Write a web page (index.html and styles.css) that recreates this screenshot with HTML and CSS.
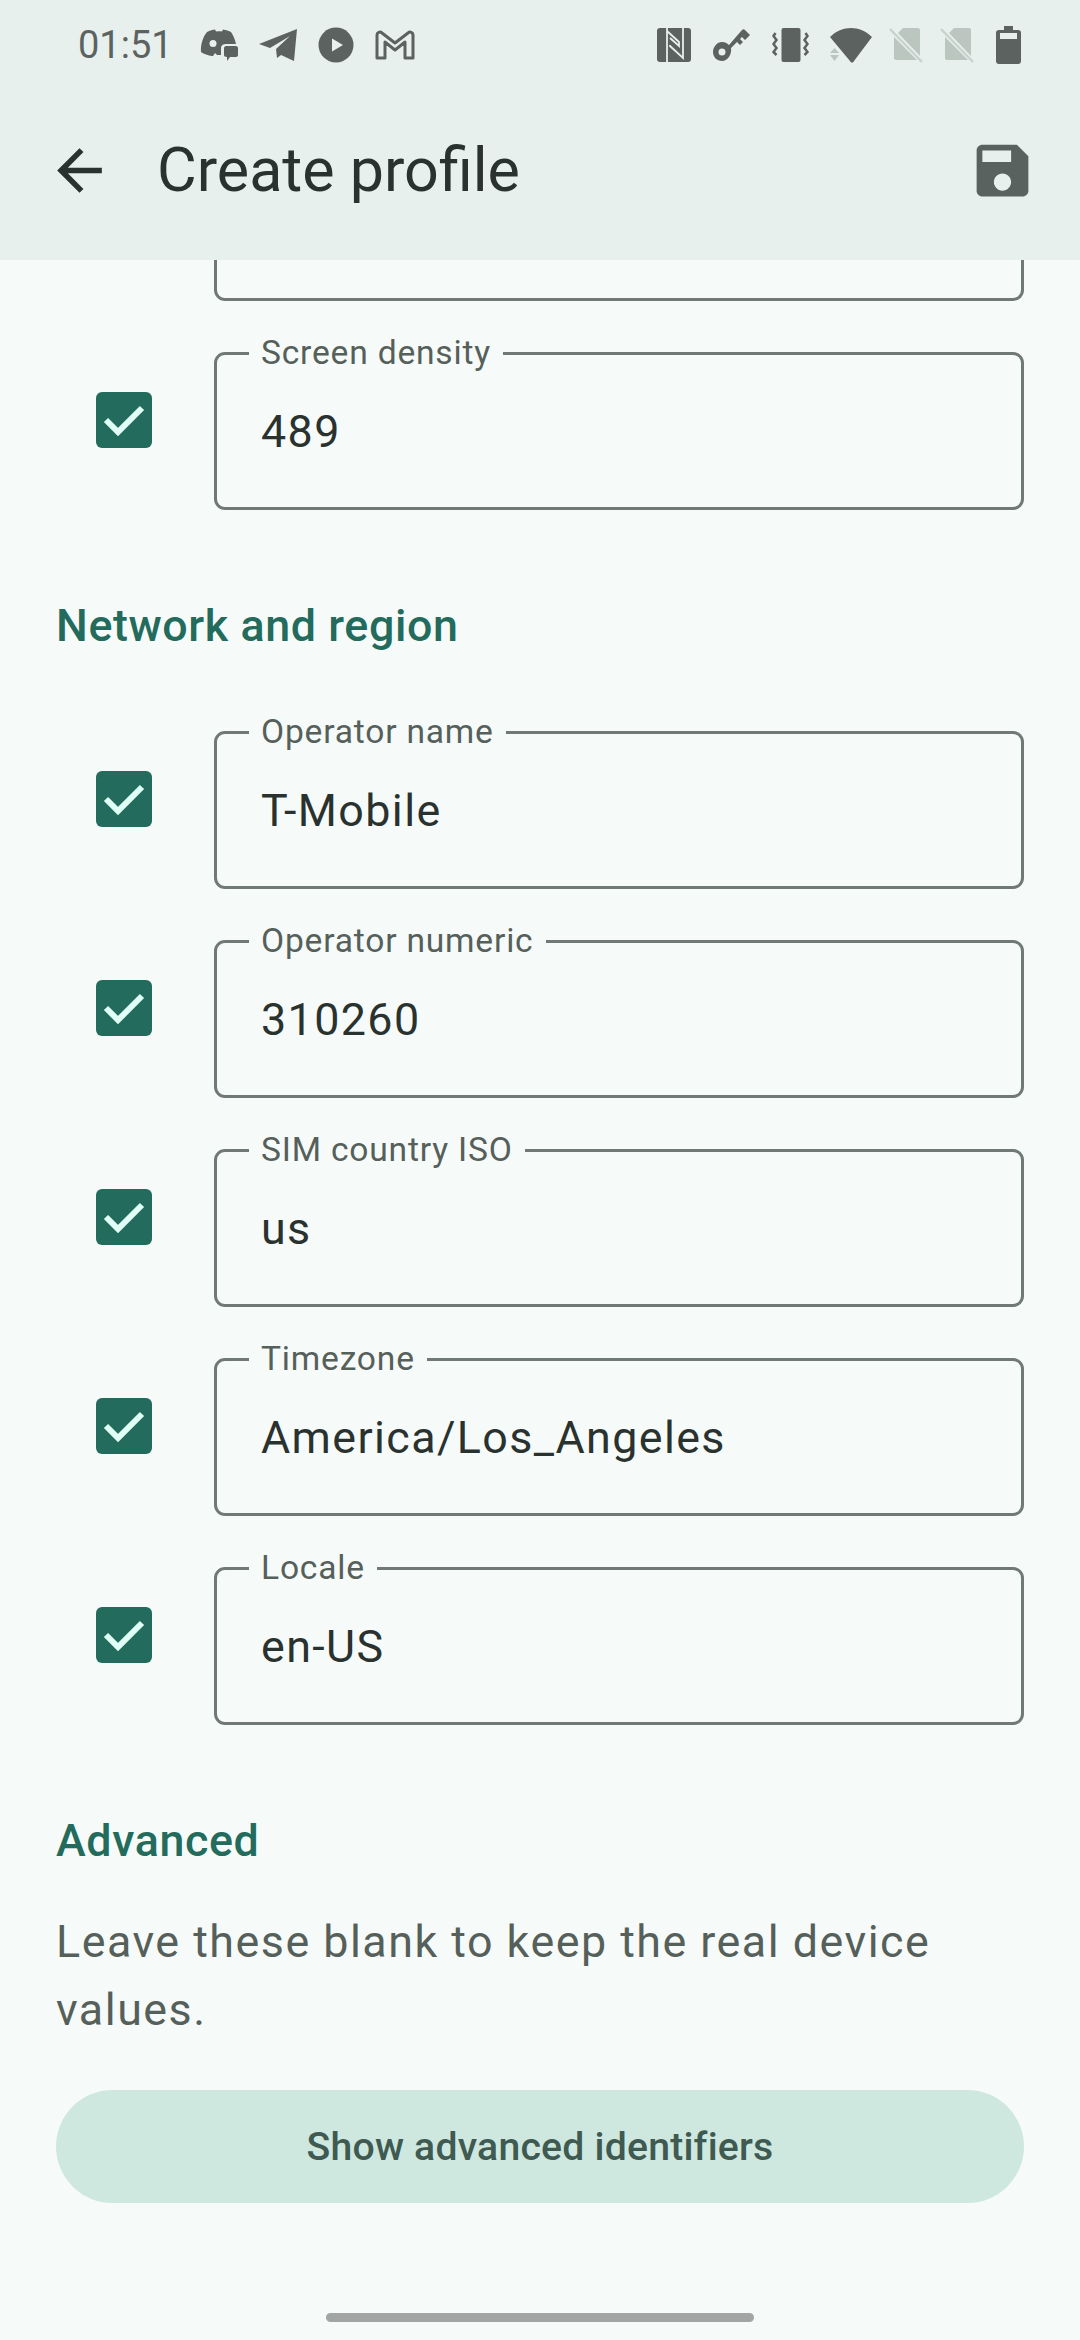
FILE: index.html
```html
<!DOCTYPE html>
<html>
	<head>
		<meta charset="UTF-8">
		<title>Create profile</title>
		<link rel="stylesheet" href="styles.css">
	</head>
	<body>
		<div class="phone">
			<div class="top">
				<div class="status">
					<span class="time">01:51</span>
					<div class="icons-left">
						<svg width="38" height="32" viewBox="0 0 38 32"><path class="ic" d="M7 3c3-1.500 6-2.500 8-2.500l1 2c2-.5 5-.5 6 0l1-2c3 .5 6 1.500 8 2.500 2 3 4 7 5 12H26c-3 0-5 1.500-5 4v7h-4l-2-2-2 3-1 0c-4-.5-8-2-11-4C.5 15 3 8 7 3z"/><circle cx="13" cy="14.500" r="3.500" fill="#e7f0ed"/><path class="ic" d="M26 17h10c1 0 2 1 2 2v7c0 1-1 2-2 2h-6l-3 4v-4c-2 0-3-1-3-2v-7c0-1 1-2 2-2z"/></svg>
						<svg width="38" height="33" viewBox="0 0 38 33"><path class="ic" d="M38 0 35 32 22 26 18 29 17 20 31 7 11 19 0 15z"/></svg>
						<svg width="36" height="36" viewBox="0 0 36 36"><circle class="ic" cx="18" cy="18" r="17.500"/><path d="M14 11.500 25 18 14 24.500z" fill="#e7f0ed"/></svg>
						<svg width="40" height="30" viewBox="0 0 40 30"><path d="M2 28V5C2 2.500 5 1 7 3l13 10L33 3c2-2 5-.5 5 2v23H30V12l-10 8-10-8v16z" fill="none" stroke="#5c625f" stroke-width="3" stroke-linejoin="round"/></svg>
					</div>
					<div class="icons-right">
						<svg class="wide" width="34" height="34" viewBox="0 0 34 34"><rect class="ic" width="34" height="34" rx="3"/><path d="M10 0V34M10 3 22 14V18L13 10M13 17V18L26 30V0" fill="none" stroke="#e7f0ed" stroke-width="1.800"/></svg>
						<svg class="wide" width="39" height="32" viewBox="0 0 37 32"><path class="ic" d="M9 13c3 0 5 1 7 3L29 1c1-1 2-1 3 0l5 5-5 5-3-3-2 2 3 3-3 3-3-3-6 6c1 6-3 13-9 13-5 0-9-4-9-9s4-10 9-10z"/><circle cx="9" cy="23" r="3.500" fill="#e7f0ed"/></svg>
						<svg class="wide" width="37" height="34" viewBox="0 0 36 34"><rect class="ic" x="9" y="0" width="19" height="34" rx="2"/><path d="M3 5 1 8l3 4-3 4 3 4-3 4 3 3M33 5l2 3-3 4 3 4-3 4 3 4-3 3" fill="none" stroke="#5c625f" stroke-width="2.500"/></svg>
						<svg width="42" height="35" viewBox="0 0 42 35"><path class="ic" d="M0 9C12-3 30-3 42 9L24 33c-1 2-3 2-4 0z"/><path class="dim" d="M0 25 4.500 20 9 25zM0 27h9l-4.500 6z"/></svg>
						<svg width="34" height="36" viewBox="0 0 34 36"><path class="dim" d="M14 1h15c1 0 2 1 2 2v26L9 6zM5 10l23 23H7c-1 0-2-1-2-2z"/><path d="M1 2 33 35" stroke="#c9d3cd" stroke-width="2.500"/></svg>
						<svg width="34" height="36" viewBox="0 0 34 36"><path class="dim" d="M14 1h15c1 0 2 1 2 2v26L9 6zM5 10l23 23H7c-1 0-2-1-2-2z"/><path d="M1 2 33 35" stroke="#c9d3cd" stroke-width="2.500"/></svg>
						<svg class="wide" width="25" height="38" viewBox="0 0 25 38"><path class="ic" d="M8 0h9v4h5c2 0 3 1 3 3v28c0 2-1 3-3 3H3c-2 0-3-1-3-3V7c0-2 1-3 3-3h5z"/><rect x="4" y="7" width="17" height="6" fill="#e7f0ed"/></svg>
					</div>
				</div>
				<div class="appbar">
					<svg class="back" width="67" height="67" viewBox="0 0 24 24"><path d="M20 11H7.830l5.590-5.590L12 4l-8 8 8 8 1.410-1.410L7.830 13H20v-2z"/></svg>
					<span class="title">Create profile</span>
					<svg class="save" width="69" height="69" viewBox="0 0 24 24"><path d="M17 3H5c-1.110 0-2 .9-2 2v14c0 1.100.89 2 2 2h14c1.100 0 2-.9 2-2V7l-4-4zm-5 16c-1.660 0-3-1.340-3-3s1.340-3 3-3 3 1.340 3 3-1.340 3-3 3zm3-10H5V5h10v4z"/></svg>
				</div>
			</div>

			<div class="content">
				<div class="row row-cut">
					<div class="field field-cut"></div>
				</div>
				<div class="row">
					<span class="check"><svg width="56" height="56" viewBox="0 0 56 56"><path d="M10 28 22 40 46 16"/></svg></span>
					<div class="field"><span class="label">Screen density</span><span class="value">489</span></div>
				</div>

				<h2 class="section section-network">Network and region</h2>
				<div class="row">
					<span class="check"><svg width="56" height="56" viewBox="0 0 56 56"><path d="M10 28 22 40 46 16"/></svg></span>
					<div class="field"><span class="label">Operator name</span><span class="value">T-Mobile</span></div>
				</div>
				<div class="row">
					<span class="check"><svg width="56" height="56" viewBox="0 0 56 56"><path d="M10 28 22 40 46 16"/></svg></span>
					<div class="field"><span class="label">Operator numeric</span><span class="value">310260</span></div>
				</div>
				<div class="row">
					<span class="check"><svg width="56" height="56" viewBox="0 0 56 56"><path d="M10 28 22 40 46 16"/></svg></span>
					<div class="field"><span class="label">SIM country ISO</span><span class="value">us</span></div>
				</div>
				<div class="row">
					<span class="check"><svg width="56" height="56" viewBox="0 0 56 56"><path d="M10 28 22 40 46 16"/></svg></span>
					<div class="field"><span class="label">Timezone</span><span class="value">America/Los_Angeles</span></div>
				</div>
				<div class="row">
					<span class="check"><svg width="56" height="56" viewBox="0 0 56 56"><path d="M10 28 22 40 46 16"/></svg></span>
					<div class="field"><span class="label">Locale</span><span class="value">en-US</span></div>
				</div>

				<h2 class="section section-advanced">Advanced</h2>
				<p class="hint">Leave these blank to keep the real device values.</p>
				<div class="btn">Show advanced identifiers</div>
			</div>

			<div class="home-bar"></div>
		</div>
	</body>
</html>
```

FILE: styles.css
```css
*{
	box-sizing: border-box;
	margin: 0;
	padding: 0;
}
body{
	background: #f6fbf9;
	font-family: Roboto, "Noto Sans", sans-serif;
}
.phone{
	width: 1080px;
	height: 2340px;
	position: relative;
	overflow: hidden;
}

/* top area */
.top{
	height: 260px;
	background: #e7f0ed;
}
.status{
	height: 90px;
	display: flex;
	align-items: center;
	padding: 0 59px 0 78px;
}
.time{
	font-size: 38px;
	color: #5c625f;
	width: 122px;
}
.icons-left, .icons-right{
	display: flex;
	align-items: center;
	gap: 21px;
}
.icons-right{
	margin-left: auto;
	gap: 17px;
}
.icons-right .wide{
	margin-right: 4px;
}
.icons-right .wide:last-child{
	margin: 0 0 0 5px;
}
.ic{
	fill: #5c625f;
}
.dim{
	fill: #bcc6c0;
}
.appbar{
	height: 160px;
	display: flex;
	align-items: center;
	padding: 0 43px 0 46px;
}
.title{
	font-size: 61px;
	color: #2a322f;
	margin-left: 44px;
}
.back{
	fill: #2a322f;
}
.save{
	fill: #59625e;
	margin-left: auto;
}

/* form */
.content{
	padding: 0 56px;
}
.row{
	display: flex;
	align-items: center;
	padding-left: 40px;
	margin-bottom: 29px;
}
.row-cut{
	justify-content: flex-end;
}
.check{
	width: 56px;
	height: 56px;
	flex: none;
	background: #236b5c;
	border-radius: 6px;
	margin-right: 62px;
}
.check svg{
	display: block;
	fill: none;
	stroke: #e0fff5;
	stroke-width: 6;
}
.field{
	flex: 1;
	height: 158px;
	margin-top: 22px;
	border: 3px solid #707974;
	border-radius: 11px;
	padding-left: 44px;
	display: flex;
	align-items: center;
	position: relative;
}
.field-cut{
	flex: none;
	width: 810px;
	height: 41px;
	margin-top: 0;
	border-top: none;
	border-radius: 0 0 11px 11px;
}
.label{
	position: absolute;
	left: 32px;
	top: -21px;
	background: #f6fbf9;
	padding: 0 12px;
	font-size: 33.600px;
	line-height: 38px;
	letter-spacing: 0.8px;
	color: #56605b;
}
.value{
	font-size: 44.800px;
	letter-spacing: 1.400px;
	color: #2a322f;
}
.section{
	font-size: 44.800px;
	font-weight: 500;
	letter-spacing: 0.6px;
	color: #236b5c;
	line-height: 56px;
}
.section-network{
	margin-top: 88px;
	margin-bottom: 55px;
}
.section-advanced{
	margin-top: 88px;
}
.hint{
	font-size: 44.800px;
	line-height: 68px;
	letter-spacing: 1.500px;
	color: #56605b;
	margin-top: 39px;
}
.btn{
	height: 113px;
	margin-top: 46px;
	background: #cee8e0;
	border-radius: 57px;
	display: flex;
	align-items: center;
	justify-content: center;
	font-size: 39.200px;
	font-weight: 500;
	letter-spacing: 0.2px;
	color: #3f5a51;
}
.home-bar{
	position: absolute;
	left: 326px;
	top: 2313px;
	width: 428px;
	height: 9px;
	border-radius: 5px;
	background: #a3a5a4;
}
```
